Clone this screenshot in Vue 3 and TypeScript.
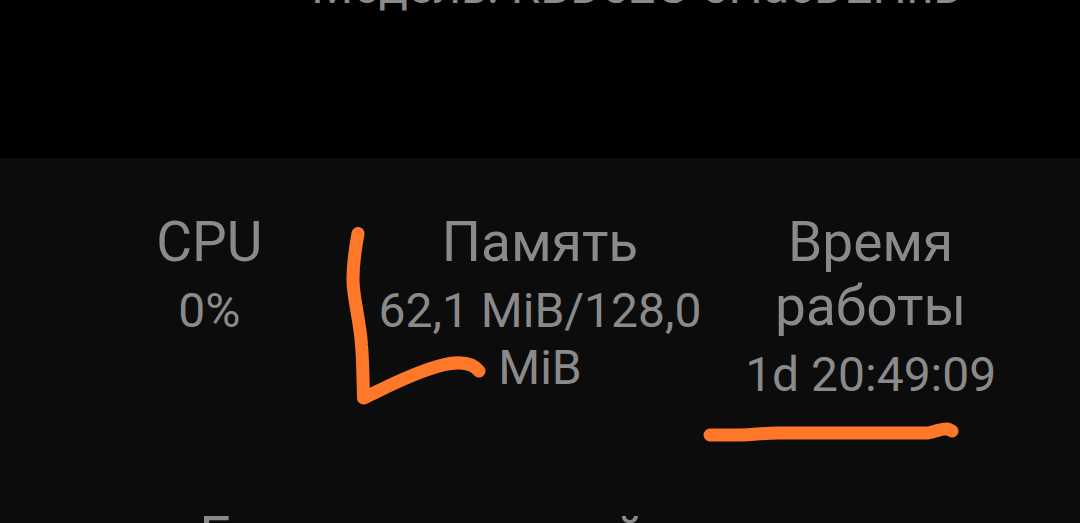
<script setup lang="ts">
interface Stat {
  label: string
  value: string
}

const stats: Stat[] = [
  { label: 'CPU', value: '0%' },
  { label: 'Память', value: '62,1 MiB/128,0 MiB' },
  { label: 'Время работы', value: '1d 20:49:09' },
]
</script>

<template>
  <main class="screen">
    <header class="device">
      <p class="model">Модель: RBD52G-5HacD2HnD</p>
    </header>
    <section class="panel">
      <dl class="stats">
        <div v-for="stat in stats" :key="stat.label" class="stat">
          <dt>{{ stat.label }}</dt>
          <dd>{{ stat.value }}</dd>
        </div>
      </dl>
      <h2 class="next">Есть постоянный доступ к</h2>
    </section>
    <svg class="marks" width="1080" height="523" viewBox="0 0 1080 523" aria-hidden="true">
      <path d="M358 233.500C355 250 353 266 353 280C353 298 360 320 361.500 345C363 362 363 380 363.500 398C385 388 410 374 439 366C457 361 472 362 479 371" />
      <path d="M710 435H740C755 435 760 433 778 433H928C938 431 943 428 948 429L952 431" />
    </svg>
  </main>
</template>

<style>
html,
body {
  background: #000;
}
</style>

<style scoped>
.screen {
  position: relative;
  height: 100vh;
  overflow: hidden;
  display: flex;
  flex-direction: column;
  background: #000;
  color: #8a8a8a;
  font-family: Roboto, "Noto Sans", sans-serif;
  text-align: center;
}

.device {
  flex: none;
  height: 158px;
  display: flex;
  flex-direction: column;
  align-items: center;
}

.model {
  margin: -42px 0 0;
  padding-left: 196px;
  font-size: 48px;
  line-height: 57px;
  white-space: nowrap;
}

.panel {
  flex: 1 0 auto;
  padding: 52px 44px 0;
  background: #0c0c0c;
}

.stats {
  display: grid;
  grid-template-columns: repeat(3, minmax(0, 1fr));
  margin: 0;
  padding-bottom: 47px;
  border-bottom: 2px solid #090909;
}

dt {
  font-size: 55px;
  line-height: 64px;
}

dd {
  margin: 8px 0 0;
  font-size: 48px;
  line-height: 57px;
}

.next {
  margin: 53px 0 0;
  font-size: 55px;
  font-weight: 400;
  line-height: 64px;
}

.marks {
  position: absolute;
  top: 0;
  left: 0;
  fill: none;
  stroke: #ff7729;
  stroke-width: 13px;
  stroke-linecap: round;
  stroke-linejoin: round;
  pointer-events: none;
}
</style>
